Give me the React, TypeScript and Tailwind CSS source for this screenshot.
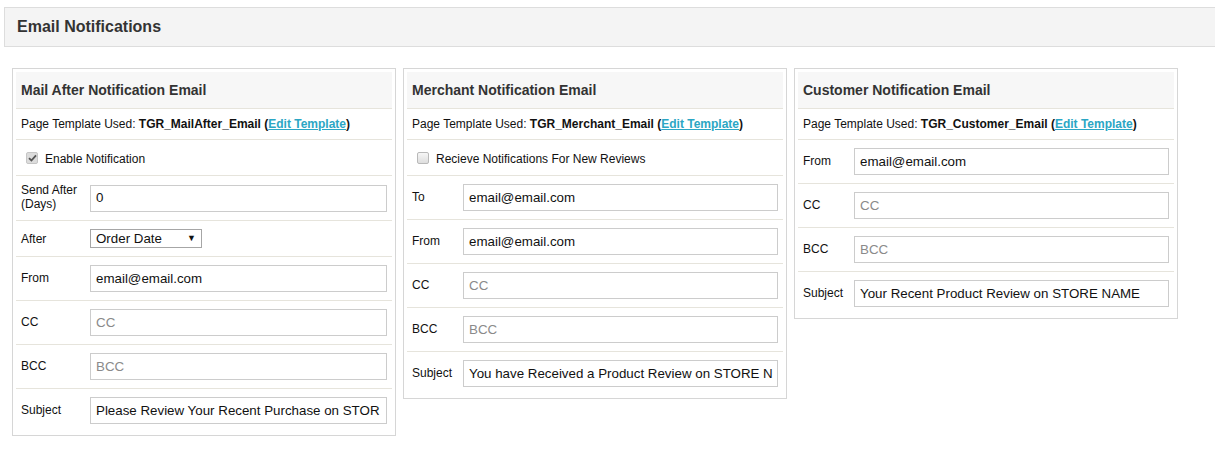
import React from "react";

const font = { fontFamily: '"Liberation Sans", Arial, sans-serif' };

function TextInput({ value, placeholder }: { value?: string; placeholder?: string }) {
  return (
    <div className="flex-1 h-[27px] border border-[#cccccc] bg-white flex items-center px-[5px] overflow-hidden whitespace-nowrap text-[13.33px]">
      {value ? <span className="text-[#111]">{value}</span> : <span className="text-[#8a8a8a]">{placeholder}</span>}
    </div>
  );
}

function FieldRow({ label, labelW, value, placeholder, twoLine }: { label: React.ReactNode; labelW: string; value?: string; placeholder?: string; twoLine?: boolean }) {
  return (
    <div className={`border-t border-[#e6e4dc] flex items-center pl-[5px] pr-[5px] ${twoLine ? "h-[45px]" : "h-[44px]"}`}>
      <div className={`${labelW} shrink-0 text-[12px] leading-[14px] text-[#111] pb-[2px]`}>{label}</div>
      <TextInput value={value} placeholder={placeholder} />
    </div>
  );
}

function TemplateRow({ name }: { name: string }) {
  return (
    <div className="border-t border-[#e6e4dc] h-[31px] flex items-center pl-[5px] text-[12px] text-[#111]">
      <span>Page Template Used:&nbsp;</span>
      <span className="font-bold">{name}</span>
      <span>&nbsp;</span>
      <span className="font-bold">(</span>
      <span className="font-bold text-[#2ba6c4] underline">Edit Template</span>
      <span className="font-bold">)</span>
    </div>
  );
}

function CheckRow({ label, checked }: { label: string; checked?: boolean }) {
  return (
    <div className="border-t border-[#e6e4dc] h-[36px] flex items-center pl-[10px] text-[12px] text-[#111]">
      {checked ? (
        <div className="w-[12px] h-[12px] rounded-[2px] bg-[#dcdcdc] border border-[#c6c6c6] flex items-center justify-center mr-[7px]">
          <svg width="9" height="8" viewBox="0 0 9 8">
            <path d="M1 4.2 L3.4 6.5 L8 1.3" stroke="#555" strokeWidth="1.8" fill="none" />
          </svg>
        </div>
      ) : (
        <div className="w-[12px] h-[12px] rounded-[2px] bg-gradient-to-b from-[#f6f6f6] to-[#dedede] border border-[#b9b9b9] mr-[7px]" />
      )}
      <span className="pt-[3px]">{label}</span>
    </div>
  );
}

function Panel({ title, children }: { title: string; children: React.ReactNode }) {
  return (
    <div className="w-[384px] border border-[#d6d6d6] p-[3px] bg-white self-start">
      <div className="h-[36px] bg-[#f7f7f7] flex items-center pl-[5px] text-[14px] font-bold text-[#333]">{title}</div>
      {children}
    </div>
  );
}

export default function App() {
  return (
    <div className="w-[1215px] h-[450px] bg-white overflow-hidden" style={font}>
      <div className="pt-[7px] pl-[4px]">
        <div className="h-[40px] bg-[#f4f4f4] border-y border-l border-[#dddddd] flex items-center pl-[12px]">
          <span className="text-[16px] font-bold text-[#333]">Email Notifications</span>
        </div>
      </div>
      <div className="flex gap-[7px] pl-[12px] pt-[21px]">
        <Panel title="Mail After Notification Email">
          <TemplateRow name="TGR_MailAfter_Email" />
          <CheckRow label="Enable Notification" checked />
          <FieldRow labelW="w-[69px]" label={<>Send After<br />(Days)</>} value="0" twoLine />
          <div className="border-t border-[#e6e4dc] h-[36px] flex items-center pl-[5px]">
            <div className="w-[69px] shrink-0 text-[12px] text-[#111]">After</div>
            <div className="w-[112px] h-[19px] border border-[#a6a6a6] bg-white flex items-center justify-between pl-[5px] pr-[5px] text-[13.33px] text-[#111]">
              <span>Order Date</span>
              <span className="text-[9px]">▼</span>
            </div>
          </div>
          <FieldRow labelW="w-[69px]" label="From" value="email@email.com" />
          <FieldRow labelW="w-[69px]" label="CC" placeholder="CC" />
          <FieldRow labelW="w-[69px]" label="BCC" placeholder="BCC" />
          <FieldRow labelW="w-[69px]" label="Subject" value="Please Review Your Recent Purchase on STOR" />
        </Panel>
        <Panel title="Merchant Notification Email">
          <TemplateRow name="TGR_Merchant_Email" />
          <CheckRow label="Recieve Notifications For New Reviews" />
          <FieldRow labelW="w-[51px]" label="To" value="email@email.com" />
          <FieldRow labelW="w-[51px]" label="From" value="email@email.com" />
          <FieldRow labelW="w-[51px]" label="CC" placeholder="CC" />
          <FieldRow labelW="w-[51px]" label="BCC" placeholder="BCC" />
          <FieldRow labelW="w-[51px]" label="Subject" value="You have Received a Product Review on STORE N" />
        </Panel>
        <Panel title="Customer Notification Email">
          <TemplateRow name="TGR_Customer_Email" />
          <FieldRow labelW="w-[51px]" label="From" value="email@email.com" />
          <FieldRow labelW="w-[51px]" label="CC" placeholder="CC" />
          <FieldRow labelW="w-[51px]" label="BCC" placeholder="BCC" />
          <FieldRow labelW="w-[51px]" label="Subject" value="Your Recent Product Review on STORE NAME" />
        </Panel>
      </div>
    </div>
  );
}
